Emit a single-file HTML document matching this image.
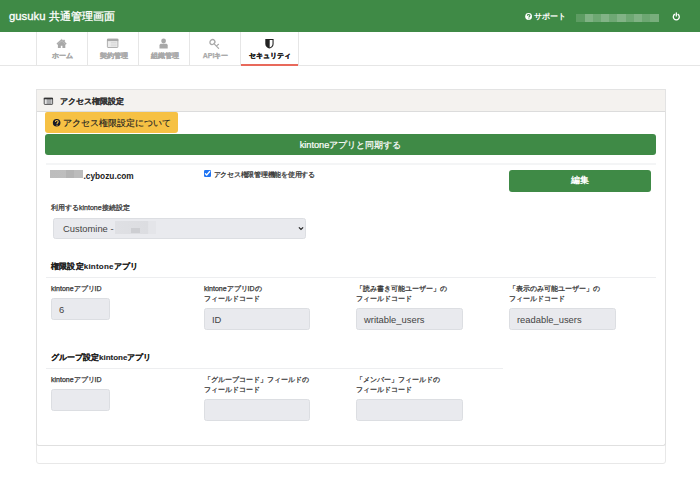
<!DOCTYPE html>
<html><head><meta charset="utf-8">
<style>
*{box-sizing:border-box;margin:0;padding:0}
html,body{width:700px;height:483px;overflow:hidden;background:#fff;font-family:"Liberation Sans",sans-serif;color:#333}
.a{position:absolute;white-space:nowrap}
#hdr{position:absolute;left:0;top:0;width:700px;height:32px;background:#3f8a46}
.ttl{left:9px;top:9px;font-size:11.3px;line-height:14px;color:#fff;-webkit-text-stroke:0.3px #fff}
.sup{left:534px;top:12px;font-size:7.7px;line-height:10px;color:#fff;font-weight:bold}
.tab{position:absolute;top:32px;height:33px;border-right:1px solid #e6e6e6}
.tabt{position:absolute;left:0;right:0;top:51px;text-align:center;font-size:7px;line-height:9px;color:#aaa;font-weight:bold;-webkit-text-stroke:0.25px currentColor}
#nav{position:absolute;left:0;top:65px;width:700px;height:1px;background:#e6e6e6}
.card{position:absolute;border:1px solid #e3e3e3;border-radius:2px}
.hr{position:absolute;height:1px;background:#edeef0}
.lbl{font-size:7px;line-height:10px;color:#333;-webkit-text-stroke:0.25px currentColor}
.inp{position:absolute;background:#e9eaee;border:1px solid #dcdee2;border-radius:2.5px;font-size:9.4px;color:#444}
.inp span{position:absolute;left:7px;top:5px;line-height:11px}
.sec{font-size:8px;line-height:10px;font-weight:bold;color:#222;letter-spacing:0.2px;-webkit-text-stroke:0.1px currentColor}
</style></head><body>
<div id="hdr"></div>
<div class="a ttl">gusuku 共通管理画面</div>
<svg class="a" style="left:520px;top:10px" width="14" height="14" viewBox="0 0 14 14"><circle cx="8.6" cy="6.5" r="3.4" fill="#fff"/><path d="M7.5 5.7C7.5 4.9 8 4.5 8.7 4.5 9.4 4.5 9.9 4.9 9.9 5.6 9.9 6.4 8.9 6.5 8.9 7.5" stroke="#3f8a46" stroke-width="1.2" fill="none"/><circle cx="8.9" cy="8.7" r="0.55" fill="#3f8a46"/></svg>
<div class="a sup">サポート</div>
<div class="a" style="left:576px;top:14px;width:83px;height:8px;background:linear-gradient(90deg,#5d9c62 0px,#5d9c62 9px,#80b284 9px,#80b284 17px,#6ea873 17px,#6ea873 25px,#82b386 25px,#82b386 33px,#6fa874 33px,#6fa874 41px,#82b386 41px,#82b386 50px,#6ea873 50px,#6ea873 58px,#80b284 58px,#80b284 66px,#6da772 66px,#6da772 74px,#78ae7c 74px,#78ae7c 83px)"></div>
<svg class="a" style="left:670px;top:9.5px" width="12" height="12" viewBox="0 0 12 12"><path d="M4.6 4.4A3 3 0 1 0 8 4.4" stroke="#fff" stroke-width="1.3" fill="none" stroke-linecap="round"/><path d="M6.3 3v3" stroke="#fff" stroke-width="1.3" stroke-linecap="round"/></svg>

<!-- tabs -->
<div class="a" style="left:36px;top:32px;width:1px;height:33px;background:#e6e6e6"></div>
<div class="tab" style="left:36px;width:52px"></div>
<div class="tab" style="left:88px;width:51px"></div>
<div class="tab" style="left:139px;width:51px"></div>
<div class="tab" style="left:190px;width:51px"></div>
<div class="tab" style="left:241px;width:58px"></div>
<div id="nav"></div>
<div class="a" style="left:241px;top:64px;width:57px;height:2px;background:#e8695b"></div>
<div class="tabt" style="left:36px;right:auto;width:52px">ホーム</div>
<div class="tabt" style="left:88px;right:auto;width:51px">契約管理</div>
<div class="tabt" style="left:139px;right:auto;width:51px">組織管理</div>
<div class="tabt" style="left:190px;right:auto;width:51px">APIキー</div>
<div class="tabt" style="left:241px;right:auto;width:58px;color:#222">セキュリティ</div>
<!-- icons -->
<svg class="a" style="left:52px;top:36px" width="20" height="16" viewBox="0 0 20 16"><path d="M9.6 3.3L4.8 7.6l0.7 0.8L9.6 4.7l4.1 3.7 0.7-0.8-1.8-1.6V4h-1.2v0.9z" fill="#a8a8a8" stroke="#a8a8a8" stroke-width="0.5" stroke-linejoin="round"/><path d="M5.9 8.2L9.6 5l3.7 3.2V12H10.4V9.7H8.8V12H5.9z" fill="#a8a8a8"/></svg>
<svg class="a" style="left:102px;top:36px" width="20" height="16" viewBox="0 0 20 16"><rect x="5.4" y="3.2" width="10.5" height="8.3" rx="0.6" fill="#ececec" stroke="#a8a8a8" stroke-width="0.9"/><rect x="5" y="2.8" width="11.3" height="2.3" fill="#a8a8a8"/><path d="M8.8 6.4h5.8M8.8 8.1h5.8M8.8 9.8h5.8" stroke="#d0d0d0" stroke-width="0.7"/></svg>
<svg class="a" style="left:154px;top:36px" width="20" height="16" viewBox="0 0 20 16"><circle cx="9.6" cy="5" r="2.4" fill="#a8a8a8"/><path d="M5.5 12.4V9.5C5.5 8.4 6.3 7.8 7.4 7.8h4.4c1.1 0 1.9.6 1.9 1.7v2.9z" fill="#a8a8a8"/></svg>
<svg class="a" style="left:205px;top:36px" width="20" height="16" viewBox="0 0 20 16"><ellipse cx="7.4" cy="6.1" rx="2.6" ry="2.3" transform="rotate(-40 7.4 6.1)" fill="none" stroke="#a8a8a8" stroke-width="1.3"/><path d="M9.2 7.9l4.4 4.5M11.9 9.6l1.6-1.3" stroke="#a8a8a8" stroke-width="1.2" stroke-linecap="round"/></svg>
<svg class="a" style="left:259px;top:36px" width="20" height="16" viewBox="0 0 20 16"><path d="M6.3 3H14.6V8C14.6 10.4 12.5 12 10.45 12.6 8.4 12 6.3 10.4 6.3 8z" fill="#222"/><path d="M10.7 4.1H13.5V8C13.5 9.8 12.1 11 10.7 11.4z" fill="#fff"/></svg>

<!-- outer card -->
<div class="card" style="left:36px;top:89px;width:630px;height:375px;border-color:#e8e8e8;border-radius:3px"></div>
<div class="a" style="left:36px;top:89px;width:630px;height:23px;background:#f4f2ef;border:1px solid #e3e3e3;border-bottom-color:#dcdcdc"></div>
<div class="card" style="left:36px;top:111px;width:630px;height:335px;border-color:#e0e0e0;border-top:none;border-radius:0 0 3px 3px"></div>
<svg class="a" style="left:40px;top:94px" width="18" height="14" viewBox="0 0 18 14"><rect x="4.2" y="4.2" width="8.4" height="6.2" rx="0.6" fill="#a9aaac" stroke="#4a4a4a" stroke-width="0.9"/><rect x="3.8" y="3.8" width="9.2" height="1.5" fill="#333"/><rect x="4.9" y="5.5" width="1.7" height="4.4" fill="#e6e6e6"/><rect x="11.1" y="5.5" width="1" height="4.4" fill="#c9cacc"/></svg>
<div class="a sec" style="left:60px;top:97px;font-size:8px;color:#333;letter-spacing:0">アクセス権限設定</div>

<div class="a" style="left:45px;top:112px;width:133px;height:21px;background:#f6c144;border-radius:2px 2px 3px 3px"></div>
<svg class="a" style="left:50px;top:116px" width="14" height="14" viewBox="0 0 14 14"><circle cx="6.65" cy="6.8" r="3.8" fill="#161a2a"/><path d="M5.4 5.9C5.4 5 6 4.5 6.8 4.5 7.6 4.5 8.2 5 8.2 5.7 8.2 6.6 7 6.7 7 7.9" stroke="#f6c144" stroke-width="1.05" fill="none"/><circle cx="7" cy="9.2" r="0.6" fill="#f6c144"/></svg>
<div class="a" style="left:63px;top:117.5px;font-size:9px;line-height:11px;color:#222;-webkit-text-stroke:0.15px currentColor">アクセス権限設定について</div>

<div class="a" style="left:45px;top:134px;width:611px;height:21px;background:#3f8a46;border-radius:3px"></div>
<div class="a" style="left:45px;top:139.7px;width:611px;text-align:center;font-size:9.2px;line-height:11px;color:#fff;-webkit-text-stroke:0.2px #fff">kintoneアプリと同期する</div>

<div class="hr" style="left:46px;top:163px;width:610px;height:2px;background:#f4f5f6"></div>
<div class="a" style="left:49.5px;top:170px;width:33.5px;height:8px;background:linear-gradient(90deg,#bdbdbd 0,#bebebe 16px,#b4b4b4 16px,#b4b4b4 24.5px,#bcbcbc 24.5px)"></div>
<div class="a" style="left:83.5px;top:171px;font-size:8.3px;line-height:10px;font-weight:bold;color:#222">.cybozu.com</div>
<div class="a" style="left:204px;top:170px;width:7px;height:7px;background:#1f74f3;border-radius:1.2px"></div>
<svg class="a" style="left:204px;top:170px" width="7" height="7" viewBox="0 0 7 7"><path d="M1.4 3.7L2.7 5 5.7 1.5" stroke="#fff" stroke-width="1.3" fill="none" stroke-linecap="round" stroke-linejoin="round"/></svg>
<div class="a lbl" style="left:213.5px;top:169.5px;font-size:7px;letter-spacing:-0.25px">アクセス権限管理機能を使用する</div>
<div class="a" style="left:509px;top:170px;width:142px;height:22px;background:#3f8a46;border-radius:3px"></div>
<div class="a" style="left:509px;top:175px;width:142px;text-align:center;font-size:9px;line-height:11px;color:#fff;font-weight:bold">編集</div>

<div class="a lbl" style="left:51px;top:203px">利用するkintone接続設定</div>
<div class="inp" style="left:53px;top:218px;width:253px;height:21px"><span style="left:9px;top:3.5px">Customine -</span></div>
<div class="a" style="left:115px;top:221px;width:41px;height:13px;background:linear-gradient(90deg,#dfe0e4,#dcdde1 80%,#e4e5e9 82%)"></div>
<div class="a" style="left:131px;top:228px;width:9px;height:5px;background:#cdced2"></div>
<svg class="a" style="left:297.5px;top:226px" width="6" height="5" viewBox="0 0 12 10"><path d="M1.8 2.8L6 7l4.2-4.2" stroke="#222" stroke-width="2.4" fill="none"/></svg>

<div class="a sec" style="left:51px;top:261.5px">権限設定kintoneアプリ</div>
<div class="hr" style="left:46px;top:277px;width:610px"></div>
<div class="a lbl" style="left:51px;top:284px">kintoneアプリID</div>
<div class="inp" style="left:51px;top:298px;width:59px;height:22px"><span>6</span></div>
<div class="a lbl" style="left:204px;top:284px">kintoneアプリIDの<br>フィールドコード</div>
<div class="inp" style="left:204px;top:308px;width:106px;height:22px"><span>ID</span></div>
<div class="a lbl" style="left:356px;top:284px">「読み書き可能ユーザー」の<br>フィールドコード</div>
<div class="inp" style="left:356px;top:308px;width:107px;height:22px"><span>writable_users</span></div>
<div class="a lbl" style="left:509px;top:284px">「表示のみ可能ユーザー」の<br>フィールドコード</div>
<div class="inp" style="left:509px;top:308px;width:107px;height:22px"><span>readable_users</span></div>

<div class="a sec" style="left:51px;top:352.5px;letter-spacing:0">グループ設定kintoneアプリ</div>
<div class="hr" style="left:46px;top:368px;width:457px"></div>
<div class="a lbl" style="left:51px;top:375px">kintoneアプリID</div>
<div class="inp" style="left:51px;top:389px;width:59px;height:22px"></div>
<div class="a lbl" style="left:204px;top:375px">「グループコード」フィールドの<br>フィールドコード</div>
<div class="inp" style="left:204px;top:399px;width:106px;height:22px"></div>
<div class="a lbl" style="left:356px;top:375px">「メンバー」フィールドの<br>フィールドコード</div>
<div class="inp" style="left:356px;top:399px;width:107px;height:22px"></div>
</body></html>
